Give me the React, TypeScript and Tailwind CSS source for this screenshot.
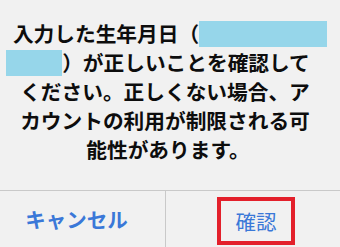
export default function App() {
  const font = { fontFamily: '"Noto Sans CJK JP", "Noto Sans", sans-serif' };
  return (
    <div className="flex h-[247px] w-[340px] flex-col overflow-hidden bg-[#f1f1f1]" style={font}>
      {/* Message */}
      <div className="pt-[19px] text-[20.7px] font-bold leading-[29px] text-[#0d0d0d]">
        <div className="flex h-[29px] items-center justify-center whitespace-nowrap">
          入力した生年月日（
          <span className="inline-block h-[26px] w-[128px] bg-[#96d6ea]" />
        </div>
        <div className="flex h-[29px] items-center justify-center whitespace-nowrap pr-[24px]">
          <span className="inline-block h-[26px] w-[56px] bg-[#96d6ea]" />
          ）が正しいことを確認して
        </div>
        <div className="flex h-[29px] items-center justify-center whitespace-nowrap pr-[10px]">
          ください。正しくない場合、ア
        </div>
        <div className="flex h-[29px] items-center justify-center whitespace-nowrap pr-[10px]">
          カウントの利用が制限される可
        </div>
        <div className="flex h-[29px] items-center justify-center whitespace-nowrap pr-[4px]">
          能性があります。
        </div>
      </div>

      {/* Buttons */}
      <div className="mt-[26px] flex h-[57px] border-t border-[#c9c9c9]">
        <button className="flex w-[165px] items-center justify-center pr-[12px] text-[20.5px] font-bold text-[#3a78d8]">
          キャンセル
        </button>
        <div className="flex flex-1 items-center justify-center border-l border-[#c9c9c9]">
          <button className="ml-[6px] mt-[4px] flex h-[48px] w-[78px] items-center justify-center border-[4px] border-[#e3202b] text-[20.5px] font-normal text-[#3a78d8]">
            確認
          </button>
        </div>
      </div>
    </div>
  );
}
